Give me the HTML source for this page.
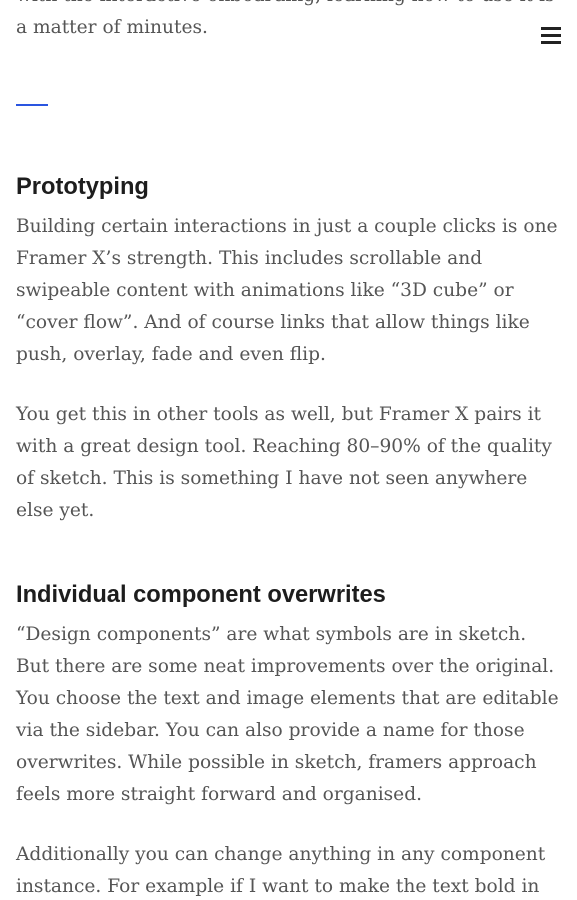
<!DOCTYPE html>
<html><head><meta charset="utf-8"><style>
html,body{margin:0;padding:0;background:#fff;width:577px;height:900px;overflow:hidden;position:relative}
.l{position:absolute;left:16px;height:32px;line-height:32px;white-space:nowrap;font-family:"DejaVu Serif","Liberation Serif",serif;font-size:18.6px;color:#555}
.h{position:absolute;left:16px;height:32px;line-height:32px;white-space:nowrap;font-family:"Liberation Sans",sans-serif;font-weight:bold;font-size:23.7px;color:#1d1d1d}
.bar{position:absolute;left:16px;top:104px;width:32px;height:2px;background:#2a55e0}
.ham{position:absolute;left:541px;width:20px;height:3px;background:#222}
</style></head><body>
<div class="l" style="top:-20px">with the interactive onboarding, learning how to use it is</div>
<div class="l" style="top:12px">a matter of minutes.</div>
<div class="ham" style="top:27px"></div><div class="ham" style="top:34px"></div><div class="ham" style="top:41px"></div>
<div class="bar"></div>
<div class="h" style="top:171px">Prototyping</div>
<div class="l" style="top:211px">Building certain interactions in just a couple clicks is one</div>
<div class="l" style="top:243px">Framer X’s strength. This includes scrollable and</div>
<div class="l" style="top:275px">swipeable content with animations like “3D cube” or</div>
<div class="l" style="top:307px">“cover flow”. And of course links that allow things like</div>
<div class="l" style="top:339px">push, overlay, fade and even flip.</div>
<div class="l" style="top:399px">You get this in other tools as well, but Framer X pairs it</div>
<div class="l" style="top:431px">with a great design tool. Reaching 80–90% of the quality</div>
<div class="l" style="top:463px">of sketch. This is something I have not seen anywhere</div>
<div class="l" style="top:495px">else yet.</div>
<div class="h" style="top:579px">Individual component overwrites</div>
<div class="l" style="top:619px">“Design components” are what symbols are in sketch.</div>
<div class="l" style="top:651px">But there are some neat improvements over the original.</div>
<div class="l" style="top:683px">You choose the text and image elements that are editable</div>
<div class="l" style="top:715px">via the sidebar. You can also provide a name for those</div>
<div class="l" style="top:747px">overwrites. While possible in sketch, framers approach</div>
<div class="l" style="top:779px">feels more straight forward and organised.</div>
<div class="l" style="top:839px">Additionally you can change anything in any component</div>
<div class="l" style="top:871px">instance. For example if I want to make the text bold in</div>
</body></html>
